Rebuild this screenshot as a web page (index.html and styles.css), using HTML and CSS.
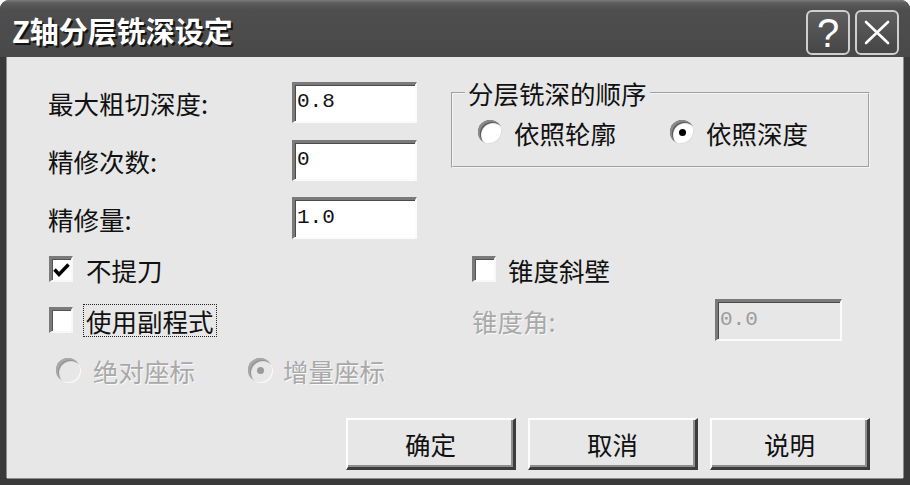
FILE: index.html
```html
<!DOCTYPE html>
<html lang="zh-CN">
<head>
<meta charset="utf-8">
<title>Z轴分层铣深设定</title>
<link rel="stylesheet" href="styles.css">
</head>
<body>
<div class="window">
  <div class="titlebar">
    <span class="title">Z轴分层铣深设定</span>
    <div class="tb-buttons">
      <div class="tb-btn"><span class="q">?</span></div>
      <div class="tb-btn">
        <svg width="40" height="41" viewBox="0 0 40 41"><path d="M9 10 L31 31 M31 10 L9 31" stroke="#fff" stroke-width="2.6" fill="none" stroke-linecap="round"/></svg>
      </div>
    </div>
  </div>
  <div class="client">
    <div class="fields">
      <div class="field"><span class="label">最大粗切深度:</span><div class="edit">0.8</div></div>
      <div class="field f2"><span class="label">精修次数:</span><div class="edit">0</div></div>
      <div class="field f3"><span class="label">精修量:</span><div class="edit">1.0</div></div>
    </div>
    <fieldset class="group">
      <legend>分层铣深的顺序</legend>
      <div class="opts">
        <div class="opt first"><span class="radio"></span><span>依照轮廓</span></div>
        <div class="opt"><span class="radio on"></span><span>依照深度</span></div>
      </div>
    </fieldset>
    <div class="check">
      <span class="cb"><svg width="19" height="18" viewBox="0 0 19 18"><path d="M2.5 8.5 L7 13.5 L16.5 3.5" stroke="#000" stroke-width="3.4" fill="none"/></svg></span>
      <span>不提刀</span>
    </div>
    <div class="check r">
      <span class="cb"></span>
      <span>锥度斜壁</span>
    </div>
    <div class="check">
      <span class="cb"></span>
      <span class="focus">使用副程式</span>
    </div>
    <div class="taper">
      <span class="tlabel">锥度角:</span>
      <div class="edit dis">0.0</div>
    </div>
    <div class="drow">
      <div class="opt first"><span class="radio dis"></span><span>绝对座标</span></div>
      <div class="opt"><span class="radio dis on"></span><span>增量座标</span></div>
    </div>
    <div class="buttons">
      <div class="btn w170">确定</div>
      <div class="btn w170">取消</div>
      <div class="btn w160">说明</div>
    </div>
  </div>
</div>
</body>
</html>
```
FILE: styles.css
```css
* { box-sizing: border-box; }
html, body { margin: 0; padding: 0; background: #fff; }
body {
  width: 910px;
  height: 485px;
  overflow: hidden;
  font-family: "Noto Sans CJK SC", "Noto Sans", sans-serif;
}
.window {
  width: 910px;
  height: 485px;
  display: flex;
  flex-direction: column;
  background: #3a3a3a;
  border-radius: 9px 9px 0 0;
  overflow: hidden;
}
.titlebar {
  height: 57px;
  flex: none;
  display: flex;
  align-items: center;
  padding: 0 11px 0 12px;
  background: linear-gradient(to bottom, #7c7c7c 0, #5c5c5c 3px, #4e4e4e 10px, #494949 100%);
}
.title {
  flex: 1;
  color: #fff;
  font-size: 29px;
  font-weight: 700;
  line-height: 1;
  padding-top: 3px;
  text-shadow: 2px 2px 0 #151515;
}
.tb-buttons { display: flex; gap: 5px; padding-top: 8px; }
.tb-btn {
  width: 44px;
  height: 45px;
  border: 2px solid #cfcfcf;
  border-radius: 6px;
  background: linear-gradient(#5e5e5e, #464646);
  display: flex;
  align-items: center;
  justify-content: center;
  color: #fff;
}
.q {
  font-family: "Liberation Sans", sans-serif;
  font-size: 40px;
  line-height: 1;
  margin-top: 1px;
}
.client {
  flex: 1;
  margin: 0 7px 7px;
  background: #e7e7e7;
  box-shadow: -1px 0 0 #8c8c8c, 1px 0 0 #8c8c8c, 0 1px 0 #8c8c8c;
  display: grid;
  grid-template-columns: 403px 1fr;
  grid-template-rows: 157px 32px 42px 30px 52px;
  row-gap: 14px;
  padding: 25px 35px 0 41px;
  font-size: 25.5px;
  color: #111;
}
.fields { display: flex; flex-direction: column; }
.field { display: flex; align-items: center; height: 41px; }
.f2 { margin-top: 17px; }
.f3 { margin-top: 16px; height: 42px; }
.label { width: 244px; }
.edit {
  width: 125px;
  height: 100%;
  background: #fff;
  border-style: solid;
  border-width: 3px 2px 2px 3px;
  border-color: #7a7a7a #fbfbfb #fbfbfb #7a7a7a;
  box-shadow: inset 1px 1px 0 #4a4a4a;
  font-family: "Liberation Mono", monospace;
  font-size: 21px;
  padding: 0 0 3px 2px;
  display: flex;
  align-items: center;
  color: #111;
}
.group {
  grid-column: 2;
  grid-row: 1;
  align-self: start;
  margin: -2px 0 0 0;
  width: 419px;
  height: 88px;
  min-width: 0;
  padding: 13px 0 0 12px;
  border: 2px groove #f4f4f4;
}
.group legend {
  padding: 0 3px;
  font-size: 25.5px;
  line-height: 26px;
}
.opts { display: flex; align-items: center; height: 26px; margin-left: 13px; }
.opt { display: flex; align-items: center; gap: 12px; }
.opt.first { width: 192px; }
.radio {
  width: 24px;
  height: 24px;
  flex: none;
  border-radius: 50%;
  background: #fff;
  box-shadow: inset 2px 2px 0 #8a8a8a, inset 3px 3px 1px #4a4a4a, inset -1px -1px 0 #dcdcdc;
  display: flex;
  align-items: center;
  justify-content: center;
}
.radio.on::after {
  content: "";
  width: 7px;
  height: 7px;
  border-radius: 50%;
  background: #000;
}
.radio.dis {
  background: #e7e7e7;
  box-shadow: inset 2px 2px 0 #a8a8a8, inset 3px 3px 1px #8c8c8c, 1px 1px 0 #fafafa;
}
.radio.dis.on::after { background: #9a9a9a; }
.check { display: flex; align-items: center; gap: 13px; margin-left: 1px; }
.check.r { margin-left: 0; padding-left: 21px; gap: 12px; }
.cb {
  width: 24px;
  height: 26px;
  flex: none;
  background: #fff;
  border-style: solid;
  border-width: 3px 2px 2px 3px;
  border-color: #7a7a7a #f8f8f8 #f8f8f8 #7a7a7a;
  box-shadow: inset 1px 1px 0 #555;
  display: flex;
  align-items: center;
  justify-content: center;
}
.focus {
  border: 1px dotted #222;
  padding: 0 2px;
  margin-left: -3px;
  height: 33px;
  line-height: 31px;
}
.taper {
  display: flex;
  align-items: center;
  padding-left: 21px;
  color: #a9a9a9;
  text-shadow: 1px 1px 0 #fafafa;
}
.tlabel { width: 243px; }
.edit.dis {
  width: 127px;
  height: 42px;
  background: #e7e7e7;
  color: #9c9c9c;
  text-shadow: none;
}
.drow {
  display: flex;
  align-items: center;
  padding-left: 8px;
  color: #a9a9a9;
  text-shadow: 1px 1px 0 #fafafa;
}
.drow .opt.first { width: 192px; gap: 13px; }
.drow .opt { gap: 11px; }
.buttons {
  grid-column: 1 / -1;
  display: flex;
  justify-content: flex-end;
  gap: 12px;
  margin-top: 19px;
}
.btn {
  height: 52px;
  background: #e7e7e7;
  border-style: solid;
  border-width: 2px 3px 3px 2px;
  border-color: #fdfdfd #3c3c3c #3c3c3c #fdfdfd;
  box-shadow: inset -2px -2px 0 #8e8e8e;
  display: flex;
  align-items: center;
  justify-content: center;
  font-size: 25.5px;
  color: #111;
}
.w170 { width: 170px; }
.w160 { width: 160px; }
```
